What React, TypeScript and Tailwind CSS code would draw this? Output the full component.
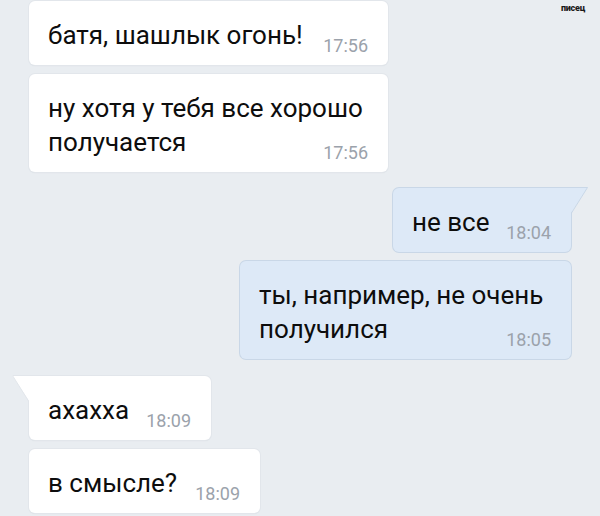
import clsx from 'clsx';

type Side = 'in' | 'out';

interface BubbleProps {
  side: Side;
  lines: string[];
  time: string;
  className?: string;
  tail?: boolean;
}

function Bubble({ side, lines, time, className, tail }: BubbleProps) {
  const last = lines[lines.length - 1];
  const isIn = side === 'in';
  return (
    <div
      className={clsx(
        'relative rounded-[6px] pl-[19px] pr-5 pt-[17px] pb-[13px] text-[26px] text-[#0d0d0d]',
        isIn
          ? 'self-start ml-[29px] bg-white shadow-[0_0_0_1px_#e2e6eb,0_1px_1px_#d2d8df]'
          : 'self-end mr-[29px] bg-[#dde9f7] shadow-[0_0_0_1px_#c9d7e7]',
        tail && (isIn ? 'rounded-tl-none' : 'rounded-tr-none'),
        className,
      )}
    >
      {tail && isIn && (
        <svg
          className="absolute right-full -top-px"
          width="17"
          height="27"
          viewBox="0 0 17 27"
        >
          <polygon points="17,0 0,0 17,26" fill="#ffffff" />
          <polyline points="17,0.5 0.5,0.5 16.5,26" fill="none" stroke="#e2e6eb" strokeWidth="1" />
        </svg>
      )}
      {tail && !isIn && (
        <svg
          className="absolute left-full -top-px"
          width="17"
          height="27"
          viewBox="0 0 17 27"
        >
          <polygon points="0,0 17,0 0,26" fill="#dde9f7" />
          <polyline points="0,0.5 16.5,0.5 0.5,26" fill="none" stroke="#c9d7e7" strokeWidth="1" />
        </svg>
      )}
      {lines.slice(0, -1).map((l) => (
        <div key={l} className="leading-[34px] whitespace-nowrap">
          {l}
        </div>
      ))}
      <div className="flex items-end justify-between">
        <span className="leading-[34px] whitespace-nowrap">{last}</span>
        <span className="pl-[14px] text-[18px] leading-[12px] text-[#9ba2ab]">{time}</span>
      </div>
    </div>
  );
}

export default function App() {
  return (
    <div
      className="relative flex h-[516px] w-[600px] flex-col overflow-hidden bg-[#e9edf1]"
      style={{ fontFamily: 'Roboto, "Noto Sans", sans-serif' }}
    >
      <span className="absolute right-[15px] top-[4px] text-[9px] font-black leading-none tracking-tight text-[#1a1a1a] [text-shadow:0_0_1px_#fff]">
        писец
      </span>

      <Bubble side="in" lines={['батя, шашлык огонь!']} time="17:56" className="mt-px w-[359px]" />
      <Bubble
        side="in"
        lines={['ну хотя у тебя все хорошо', 'получается']}
        time="17:56"
        className="mt-[9px] w-[359px]"
      />
      <Bubble side="out" lines={['не все']} time="18:04" tail className="mt-[16px] w-[178px]" />
      <Bubble
        side="out"
        lines={['ты, например, не очень', 'получился']}
        time="18:05"
        className="mt-[9px] w-[331px]"
      />
      <Bubble side="in" lines={['ахахха']} time="18:09" tail className="mt-[17px] w-[182px]" />
      <Bubble side="in" lines={['в смысле?']} time="18:09" className="mt-[9px] w-[231px]" />
    </div>
  );
}
